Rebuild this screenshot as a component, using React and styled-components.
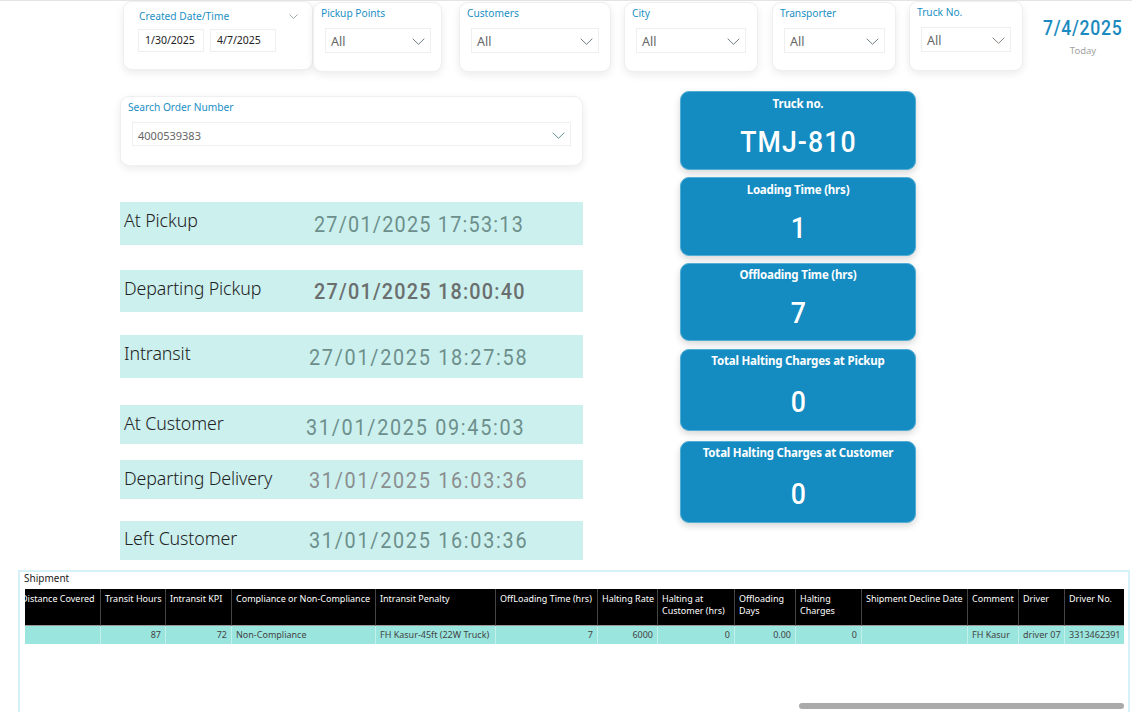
import React from "react";
import styled, { createGlobalStyle } from "styled-components";

const Global = createGlobalStyle`
  html, body { margin: 0; padding: 0; background: #fff; }
  * { box-sizing: border-box; }
  body { font-family: "Noto Sans", "Open Sans", sans-serif; }
`;

const Page = styled.div`
  width: 1132px;
  height: 712px;
  overflow: hidden;
  background: #fff;
  border-top: 1px solid #e4e4e4;
`;

const SlicerRow = styled.div`
  display: flex;
  align-items: flex-start;
  height: 90px;
  padding-left: 123px;
`;

const SlicerCard = styled.div`
  flex: none;
  width: ${p => p.$w}px;
  height: ${p => p.$h || 70}px;
  margin-left: ${p => p.$ml || 0}px;
  margin-top: ${p => p.$mt || 0}px;
  padding: ${p => p.$pt ?? 3}px 0 0 7px;
  background: #fff;
  border: 1px solid #efefef;
  border-radius: 9px;
  box-shadow: 0 3px 8px rgba(0, 0, 0, 0.08);
`;

const SlicerTitle = styled.div`
  font-size: 10.2px;
  line-height: 14px;
  color: #1a8fc4;
  white-space: nowrap;
`;

const SelectBox = styled.div`
  display: flex;
  align-items: center;
  justify-content: space-between;
  width: ${p => p.$w}px;
  height: ${p => p.$h || 25}px;
  margin: ${p => p.$mt || 8}px 0 0 ${p => p.$ml ?? 4}px;
  padding: ${p => p.$pt || 2}px 5px 0 5px;
  border: 1px solid #efefef;
  font-size: ${p => p.$fs || 12.5}px;
  color: #666;
  background: #fff;
`;

const Chevron = ({ w = 13, color = "#6f7f86" }) => (
  <svg width={w} height={7} viewBox="0 0 13 7" fill="none" style={{ flex: "none" }}>
    <path d="M0.7 0.7 L6.5 6.3 L12.3 0.7" stroke={color} strokeWidth="1" />
  </svg>
);

const DateHead = styled.div`
  display: flex;
  justify-content: space-between;
  align-items: center;
  padding: 7px 14px 0 8px;
`;

const DateInputs = styled.div`
  display: flex;
  gap: 6px;
  margin: 6px 0 0 7px;
`;

const DateBox = styled.div`
  width: 66px;
  height: 23px;
  border: 1px solid #efefef;
  padding: 0 0 0 6px;
  font-size: 10.5px;
  line-height: 21px;
  color: #222;
`;

const TodayBlock = styled.div`
  flex: none;
  width: 80px;
  margin: 14px 0 0 20px;
  text-align: center;
`;

const TodayValue = styled.div`
  font-family: Roboto, sans-serif;
  font-size: 20px;
  font-weight: 500;
  line-height: 26px;
  letter-spacing: 0.8px;
  color: #1a8ac0;
  white-space: nowrap;
  text-align: left;
  transform: scaleX(0.88);
  transform-origin: left center;
`;

const TodayLabel = styled.div`
  margin-top: 3px;
  font-size: 9.5px;
  line-height: 13px;
  color: #a3a3a3;
`;

const Main = styled.div`
  display: flex;
  align-items: flex-start;
  height: 479px;
  padding-left: 120px;
`;

const LeftColumn = styled.div`
  flex: none;
  width: 463px;
  padding-top: 5px;
`;

const SearchCard = styled.div`
  height: 70px;
  padding: 3px 0 0 7px;
  background: #fff;
  border: 1px solid #efefef;
  border-radius: 9px;
  box-shadow: 0 3px 8px rgba(0, 0, 0, 0.08);
`;

const StatusRow = styled.div`
  display: flex;
  align-items: center;
  position: relative;
  height: ${p => p.$h}px;
  margin-top: ${p => p.$mt}px;
  padding: 0 0 ${p => p.$pb || 4}px 4px;
  background: #ccf0ee;
`;

const StatusLabel = styled.div`
  font-size: 17.8px;
  font-weight: 300;
  color: #222;
  white-space: nowrap;
  letter-spacing: -0.1px;
`;

const StatusValue = styled.div`
  position: absolute;
  left: ${p => p.$x}px;
  top: 50%;
  margin-top: ${p => p.$dy || 0}px;
  transform: translateY(-50%) scaleX(0.88);
  transform-origin: left center;
  font-family: Roboto, sans-serif;
  font-size: 22.5px;
  font-weight: ${p => (p.$bold ? 500 : 400)};
  letter-spacing: ${p => p.$ls}px;
  color: ${p => p.$color};
  white-space: nowrap;
`;

const RightColumn = styled.div`
  flex: none;
  width: 236px;
  margin-left: 97px;
`;

const KpiCard = styled.div`
  height: ${p => p.$h}px;
  margin-top: ${p => p.$mt}px;
  padding-top: ${p => p.$pt || 4}px;
  text-align: center;
  color: #fff;
  background: #148bc1;
  border: 1px solid #53aed6;
  border-radius: 9px;
  box-shadow: 0 3px 7px rgba(0, 0, 0, 0.16);
`;

const KpiTitle = styled.div`
  font-size: 11.5px;
  line-height: 15px;
  font-weight: 700;
  letter-spacing: -0.2px;
`;

const KpiValue = styled.div`
  margin-top: ${p => p.$mt || 11}px;
  padding-left: 1px;
  font-family: Roboto, sans-serif;
  font-size: 30px;
  font-weight: 500;
  line-height: 38px;
  letter-spacing: ${p => p.$ls || 0}px;
  transform: scaleX(0.89);
`;

const TableFrame = styled.div`
  height: 142px;
  margin-left: 18px;
  width: 1112px;
  border: 2px solid #d6f1f7;
  border-bottom: 0;
  padding: 0 0 0 5px;
  position: relative;
`;

const TableTitle = styled.div`
  height: 17px;
  margin-left: -1px;
  font-size: 10px;
  line-height: 13px;
  color: #222;
`;

const Grid = styled.div`
  display: grid;
  width: 1099px;
  grid-template-columns: 75px 65px 66px 144px 120px 102px 60px 77px 61px 66px 106px 51px 46px 60px;
  overflow: hidden;
`;

const HeadCell = styled.div`
  height: 37px;
  padding: 4px 3px 0 4px;
  background: #000;
  color: #fff;
  font-size: 9px;
  line-height: 12px;
  border-left: ${p => (p.$first ? 0 : "1px solid #444")};
  border-bottom: 1px solid #999;
  white-space: ${p => (p.$wrap ? "normal" : "nowrap")};
  overflow: hidden;
  text-indent: ${p => p.$indent || 0}px;
`;

const BodyCell = styled.div`
  height: 18px;
  padding: 0 4px;
  background: #9ae5de;
  color: #444;
  font-size: 9px;
  line-height: 18px;
  border-left: ${p => (p.$first ? 0 : "1px solid #c4f0ec")};
  text-align: ${p => (p.$right ? "right" : "left")};
  white-space: nowrap;
  overflow: hidden;
`;

const ScrollThumb = styled.div`
  position: absolute;
  left: 779px;
  top: 131px;
  width: 325px;
  height: 6px;
  border-radius: 3px;
  background: #aaa;
`;

const rows = [
  { label: "At Pickup", value: "27/01/2025 17:53:13", h: 43, mt: 36, x: 194, ls: 1.4, color: "#6d8f8c", pb: 8 },
  { label: "Departing Pickup", value: "27/01/2025 18:00:40", h: 42, mt: 25, x: 194, ls: 1.4, color: "#6a6f6e", bold: true, pb: 7 },
  { label: "Intransit", value: "27/01/2025 18:27:58", h: 43, mt: 23, x: 189, ls: 1.95, color: "#6d8f8c", pb: 8 },
  { label: "At Customer", value: "31/01/2025 09:45:03", h: 39, mt: 27, x: 186, ls: 1.95, dy: 2, color: "#6d8f8c", pb: 3 },
  { label: "Departing Delivery", value: "31/01/2025 16:03:36", h: 39, mt: 16, x: 189, ls: 1.95, color: "#8a8e8e", pb: 3 },
  { label: "Left Customer", value: "31/01/2025 16:03:36", h: 39, mt: 22, x: 189, ls: 1.95, dy: -1, color: "#6d8f8c", pb: 5 },
];

const columns = [
  { head: "Distance Covered", cell: "", indent: -8 },
  { head: "Transit Hours", cell: "87", right: true },
  { head: "Intransit KPI", cell: "72", right: true },
  { head: "Compliance or Non-Compliance", cell: "Non-Compliance" },
  { head: "Intransit Penalty", cell: "FH Kasur-45ft (22W Truck)" },
  { head: "OffLoading Time (hrs)", cell: "7", right: true },
  { head: "Halting Rate", cell: "6000", right: true },
  { head: "Halting at Customer (hrs)", cell: "0", right: true, wrap: true },
  { head: "Offloading Days", cell: "0.00", right: true, wrap: true },
  { head: "Halting Charges", cell: "0", right: true, wrap: true },
  { head: "Shipment Decline Date", cell: "" },
  { head: "Comment", cell: "FH Kasur" },
  { head: "Driver", cell: "driver 07" },
  { head: "Driver No.", cell: "3313462391" },
];

export default function App() {
  return (
    <Page>
      <Global />
      <SlicerRow>
        <SlicerCard $w={190} $h={69} $pt={0}>
          <DateHead>
            <SlicerTitle>Created Date/Time</SlicerTitle>
            <Chevron w={9} />
          </DateHead>
          <DateInputs>
            <DateBox>1/30/2025</DateBox>
            <DateBox>4/7/2025</DateBox>
          </DateInputs>
        </SlicerCard>
        <SlicerCard $w={129} $mt={1}>
          <SlicerTitle>Pickup Points</SlicerTitle>
          <SelectBox $w={106}>All<Chevron /></SelectBox>
        </SlicerCard>
        <SlicerCard $w={152} $ml={17} $mt={1}>
          <SlicerTitle>Customers</SlicerTitle>
          <SelectBox $w={128}>All<Chevron /></SelectBox>
        </SlicerCard>
        <SlicerCard $w={134} $ml={13} $mt={1}>
          <SlicerTitle>City</SlicerTitle>
          <SelectBox $w={110}>All<Chevron /></SelectBox>
        </SlicerCard>
        <SlicerCard $w={124} $ml={14} $mt={1} $h={69}>
          <SlicerTitle>Transporter</SlicerTitle>
          <SelectBox $w={101}>All<Chevron /></SelectBox>
        </SlicerCard>
        <SlicerCard $w={114} $ml={13} $h={70}>
          <SlicerTitle>Truck No.</SlicerTitle>
          <SelectBox $w={90}>All<Chevron color="#8a7f78" /></SelectBox>
        </SlicerCard>
        <TodayBlock>
          <TodayValue>7/4/2025</TodayValue>
          <TodayLabel>Today</TodayLabel>
        </TodayBlock>
      </SlicerRow>

      <Main>
        <LeftColumn>
          <SearchCard>
            <SlicerTitle>Search Order Number</SlicerTitle>
            <SelectBox $w={439} $h={24} $mt={8} $ml={4} $fs={11} $pt={3}>4000539383<Chevron color="#5f8f8f" /></SelectBox>
          </SearchCard>
          {rows.map(r => (
            <StatusRow key={r.label} $h={r.h} $mt={r.mt} $pb={r.pb}>
              <StatusLabel>{r.label}</StatusLabel>
              <StatusValue $x={r.x} $ls={r.ls} $dy={r.dy} $color={r.color} $bold={r.bold}>{r.value}</StatusValue>
            </StatusRow>
          ))}
        </LeftColumn>
        <RightColumn>
          <KpiCard $h={79} $mt={0}>
            <KpiTitle>Truck no.</KpiTitle>
            <KpiValue $ls={1.2} $mt={12}>TMJ-810</KpiValue>
          </KpiCard>
          <KpiCard $h={79} $mt={7}>
            <KpiTitle>Loading Time (hrs)</KpiTitle>
            <KpiValue $mt={12}>1</KpiValue>
          </KpiCard>
          <KpiCard $h={78} $mt={7} $pt={3}>
            <KpiTitle>Offloading Time (hrs)</KpiTitle>
            <KpiValue $mt={12}>7</KpiValue>
          </KpiCard>
          <KpiCard $h={82} $mt={8} $pt={3}>
            <KpiTitle>Total Halting Charges at Pickup</KpiTitle>
            <KpiValue $mt={15}>0</KpiValue>
          </KpiCard>
          <KpiCard $h={82} $mt={10} $pt={3}>
            <KpiTitle>Total Halting Charges at Customer</KpiTitle>
            <KpiValue $mt={15}>0</KpiValue>
          </KpiCard>
        </RightColumn>
      </Main>

      <TableFrame>
        <TableTitle>Shipment</TableTitle>
        <Grid>
          {columns.map((c, i) => (
            <HeadCell key={c.head} $first={i === 0} $wrap={c.wrap} $indent={c.indent}>{c.head}</HeadCell>
          ))}
          {columns.map((c, i) => (
            <BodyCell key={c.head} $first={i === 0} $right={c.right}>{c.cell}</BodyCell>
          ))}
        </Grid>
        <ScrollThumb />
      </TableFrame>
    </Page>
  );
}
